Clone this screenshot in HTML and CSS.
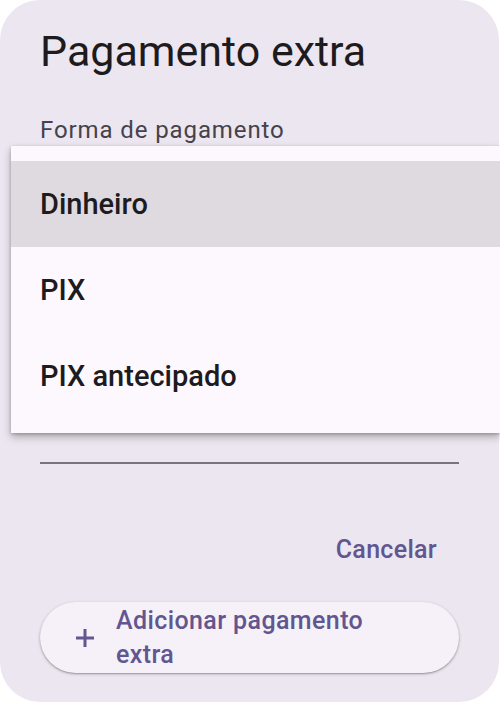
FILE: index.html
```html
<!doctype html>
<html lang="pt-BR">
  <head>
    <meta charset="utf-8">
    <meta name="viewport" content="width=device-width, initial-scale=1">
    <title>Pagamento extra</title>
    <link rel="stylesheet" href="styles.css">
  </head>
  <body>
    <div class="dialog">
      <h2 class="dialog-title">Pagamento extra</h2>
      <div class="field-label">Forma de pagamento</div>
      <div class="field"></div>

      <ul class="menu">
        <li class="menu-item selected">Dinheiro</li>
        <li class="menu-item">PIX</li>
        <li class="menu-item">PIX antecipado</li>
      </ul>

      <div class="actions">
        <button type="button" class="btn-text">Cancelar</button>
      </div>

      <button type="button" class="btn-elevated">
        <svg class="plus" width="20" height="20" viewBox="0 0 20 20">
          <path d="M10 1v18M1 10h18" stroke="currentColor" stroke-width="3" fill="none"/>
        </svg>
        <span class="btn-label">Adicionar pagamento extra</span>
      </button>
    </div>
  </body>
</html>
```

FILE: styles.css
```css
html, body {
     margin: 0;
     height: 100%;
     overflow: hidden;
}
body {
     background-color: #ffffff;
     font-family: Roboto, "Noto Sans", Arial, sans-serif;
}
.dialog {
     position: relative;
     box-sizing: border-box;
     width: 499px;
     height: 702px;
     padding: 25px 40px 0 40px;
     background-color: #ece6f0;
     border-radius: 40px;
}
.dialog-title {
     margin: 0;
     font-size: 43px;
     font-weight: 400;
     line-height: 52px;
     color: #1d1b20;
}
.field-label {
     margin-top: 39px;
     font-size: 24px;
     line-height: 28px;
     letter-spacing: 0.9px;
     color: #45424a;
}
.field {
     height: 318px;
     border-bottom: 2px solid #79757f;
}
.menu {
     position: absolute;
     top: 146px;
     left: 11px;
     width: 489px;
     margin: 0;
     padding: 15px 0 14px 0;
     list-style: none;
     background-color: #fdf8fd;
     box-shadow: 0 4px 8px rgba(0, 0, 0, .28), 0 1px 3px rgba(0, 0, 0, .2);
}
.menu-item {
     display: flex;
     align-items: center;
     height: 86px;
     padding-left: 29px;
     font-size: 29px;
     font-weight: 500;
     color: #1d1b20;
}
.menu-item.selected {
     background-color: #dedae0;
}
.actions {
     display: flex;
     justify-content: flex-end;
     margin-top: 70px;
     padding-right: 22px;
}
.btn-text {
     padding: 0;
     border: 0;
     background: transparent;
     font-family: inherit;
     font-size: 25px;
     font-weight: 500;
     line-height: 32px;
     letter-spacing: 0.3px;
     color: #625690;
     cursor: pointer;
}
.btn-elevated {
     display: flex;
     align-items: center;
     box-sizing: border-box;
     width: 419px;
     height: 71px;
     margin-top: 36px;
     padding: 0 0 0 35px;
     border: 0;
     border-radius: 36px;
     background-color: #f6f1f8;
     box-shadow: 0 1px 3px rgba(0, 0, 0, .3), 0 1px 1px rgba(0, 0, 0, .12);
     color: #625690;
     font-family: inherit;
     text-align: left;
     cursor: pointer;
}
.plus {
     flex: none;
}
.btn-label {
     max-width: 280px;
     margin-left: 21px;
     font-size: 25px;
     font-weight: 500;
     line-height: 34px;
     letter-spacing: 0.4px;
}
```
